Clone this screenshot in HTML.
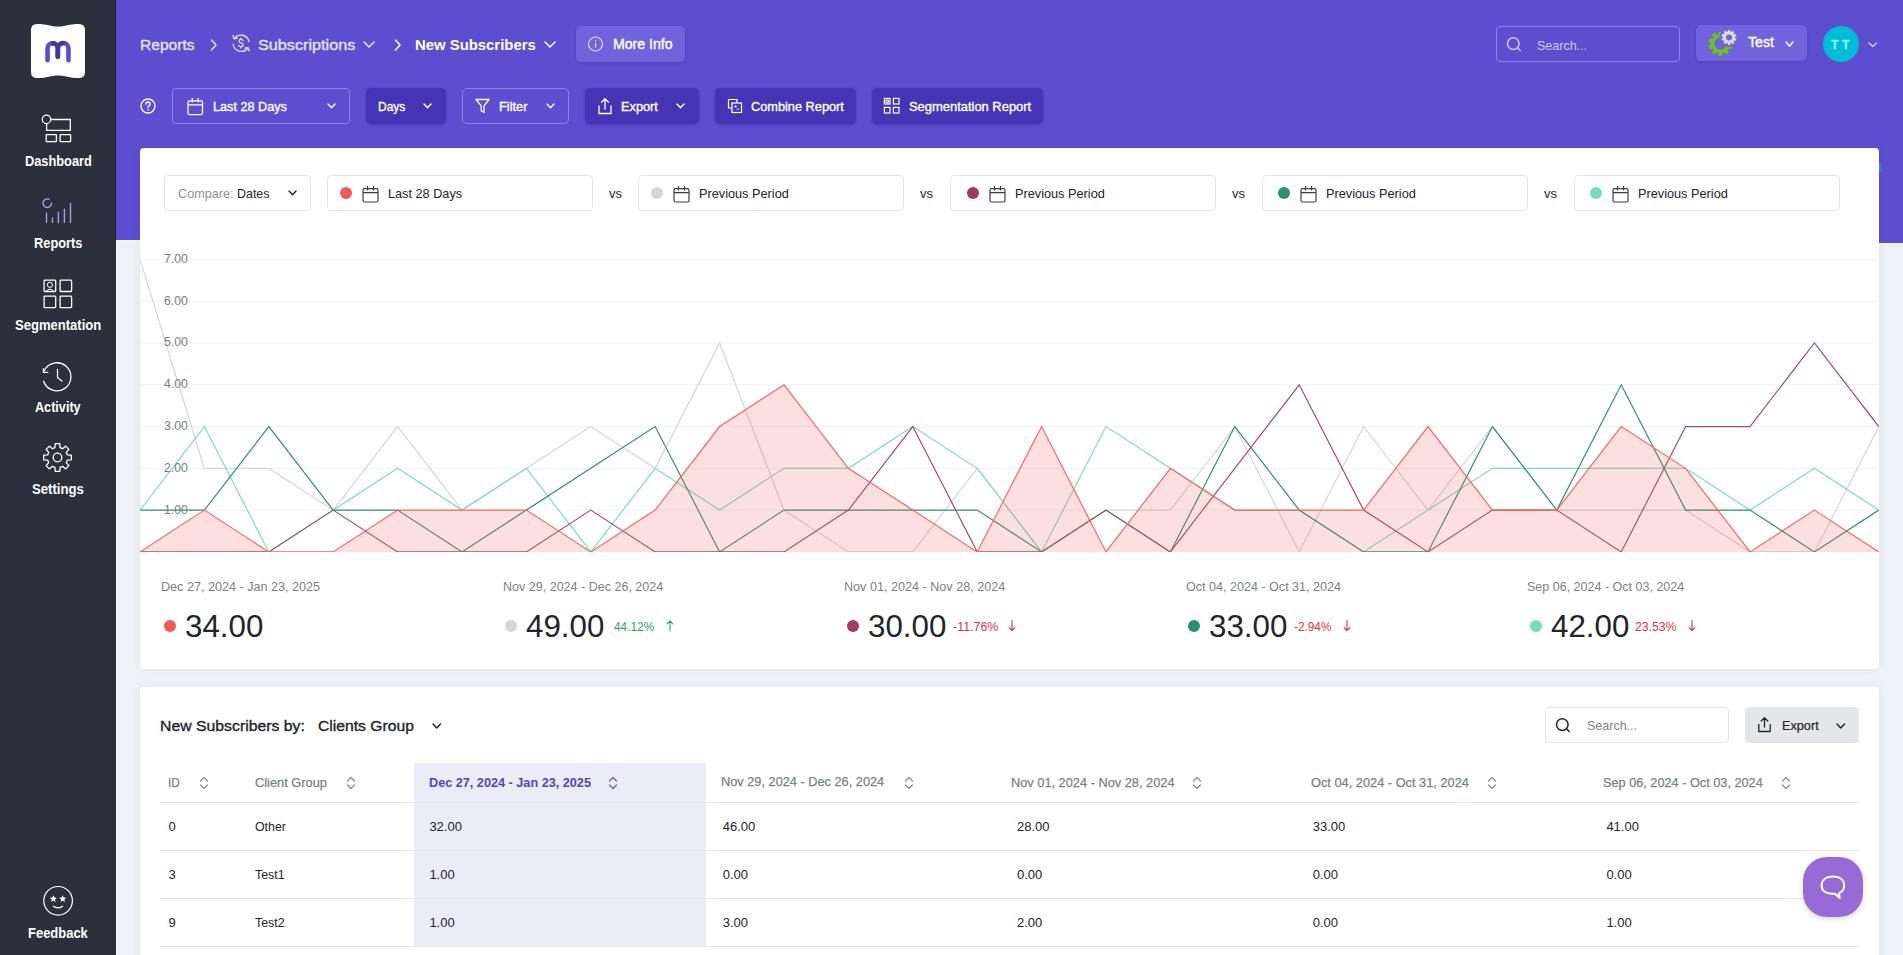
<!DOCTYPE html><html><head><meta charset="utf-8"><style>
html,body{margin:0;padding:0;width:1903px;height:955px;overflow:hidden;background:#eef2f7;font-family:"Liberation Sans",sans-serif;}
.a{position:absolute;box-sizing:border-box;}
svg.a{overflow:visible}
.t{position:absolute;white-space:nowrap;line-height:1;transform-origin:0 0;}
</style></head><body>

<div class="a" style="left:0px;top:0px;width:116px;height:955px;background:#2a313c"></div>
<div class="a" style="left:116px;top:0px;width:1787px;height:240px;background:#5d4ed0"></div>
<div class="a" style="left:1870px;top:0px;width:33px;height:243px;background:#5d4ed0"></div>
<div class="a" style="left:116px;top:240px;width:1px;height:715px;background:#ffffff"></div>
<div class="a" style="left:116px;top:240px;width:1754px;height:1px;background:#f7f9f7"></div>
<div class="a" style="left:1870px;top:243px;width:33px;height:1px;background:#f7f9f7"></div>
<div class="a" style="left:115px;top:0px;width:1px;height:955px;background:#1f262e"></div>
<svg class="a" style="left:31px;top:24px" width="54" height="54" viewBox="0 0 54 54"><path d="M6 0 C16 0 20 2.6 27 2.6 C34 2.6 38 0 48 0 Q54 0 54 6 L54 48 Q54 54 48 54 C38 54 34 51.4 27 51.4 C20 51.4 16 54 6 54 Q0 54 0 48 L0 6 Q0 0 6 0 Z" fill="#fff"/><g fill="none" stroke-width="4.6" stroke-linecap="round"><path d="M16.55 36.15 V24.35 A5.15 5.15 0 0 1 26.85 24.35 V32.75" stroke="#5b4bd0"/><path d="M37.45 36.15 V24.35 A5.3 5.3 0 0 0 26.85 24.35 V32.75" stroke="#5b4bd0"/><path d="M20.2 19.4 A5.15 5.15 0 0 1 26.85 24.35 V32.75 M33.6 19.4 A5.3 5.3 0 0 0 26.85 24.35" stroke="#3f3a98" stroke-width="4.2" stroke-linecap="butt"/><path d="M26.85 30 V32.75" stroke="#3f3a98" stroke-width="4.2"/></g></svg>
<svg class="a" style="left:40px;top:110px" width="36" height="36" viewBox="0 0 36 36"><g fill="none" stroke="#ffffff" stroke-width="1.3"><circle cx="6.5" cy="9.4" r="4.2"/><path d="M10.7 9.5 H30.3 V20.4 H6.6 V13.6"/><rect x="6.2" y="24.6" width="10.2" height="7" rx="0.6"/><rect x="20.1" y="24.6" width="10.5" height="7" rx="0.6"/></g></svg>
<svg class="a" style="left:40px;top:195px" width="36" height="36" viewBox="0 0 36 36"><g fill="none" stroke="#a89cf0" stroke-width="1.4" stroke-linecap="round"><path d="M9 4.2 A4.3 4.3 0 1 0 11.6 8"/><path d="M6.5 18.3 V27.4 M12.5 23.2 V27.4 M18.4 17.2 V27.4 M24.4 14.2 V27.4 M30.5 8.3 V27.4"/></g></svg>
<svg class="a" style="left:40px;top:275px" width="36" height="36" viewBox="0 0 36 36"><g fill="none" stroke="#ffffff" stroke-width="1.3"><rect x="4.1" y="5.2" width="11.6" height="11.3" rx="0.8"/><rect x="20.1" y="5.2" width="11.5" height="11.3" rx="0.8"/><rect x="4.1" y="21.2" width="11.6" height="11.5" rx="0.8"/><rect x="20.1" y="21.2" width="11.5" height="11.5" rx="0.8"/><circle cx="9.9" cy="9.8" r="2.6" stroke-width="1"/><path d="M6 16.4 Q9.9 11.8 13.8 16.4" stroke-width="1"/></g></svg>
<svg class="a" style="left:40px;top:358px" width="36" height="36" viewBox="0 0 36 36"><g fill="none" stroke="#ffffff" stroke-width="1.3" stroke-linecap="butt"><path d="M4.2 13 A14 14 0 1 1 3.5 22.7"/><path d="M3.4 10.3 V14.4 H8.3"/><path d="M17.5 11.1 V19.5 L22.5 23.4"/></g></svg>
<svg class="a" style="left:40px;top:440px" width="36" height="36" viewBox="0 0 36 36"><g fill="none" stroke="#ffffff" stroke-width="1.3" stroke-linejoin="round"><path d="M15.20 3.69 L19.80 3.69 L20.11 7.64 L22.62 8.68 L25.64 6.11 L28.89 9.36 L26.32 12.38 L27.36 14.89 L31.31 15.20 L31.31 19.80 L27.36 20.11 L26.32 22.62 L28.89 25.64 L25.64 28.89 L22.62 26.32 L20.11 27.36 L19.80 31.31 L15.20 31.31 L14.89 27.36 L12.38 26.32 L9.36 28.89 L6.11 25.64 L8.68 22.62 L7.64 20.11 L3.69 19.80 L3.69 15.20 L7.64 14.89 L8.68 12.38 L6.11 9.36 L9.36 6.11 L12.38 8.68 L14.89 7.64Z"/><circle cx="17.5" cy="17.5" r="4.3"/></g></svg>
<svg class="a" style="left:40px;top:883px" width="36" height="36" viewBox="0 0 36 36"><g fill="none" stroke="#ffffff" stroke-width="1.2"><circle cx="18.1" cy="17.8" r="14.3"/><path d="M13 23 Q18.1 26.8 23 23"/></g><g fill="#ffffff"><path d="M13.40 12.20 L14.38 14.55 L16.92 14.76 L14.98 16.41 L15.57 18.89 L13.40 17.57 L11.23 18.89 L11.82 16.41 L9.88 14.76 L12.42 14.55Z"/><path d="M22.70 12.20 L23.68 14.55 L26.22 14.76 L24.28 16.41 L24.87 18.89 L22.70 17.57 L20.53 18.89 L21.12 16.41 L19.18 14.76 L21.72 14.55Z"/></g></svg>
<div class="t" id="nd" style="left:24.6px;top:154.00px;font-size:14px;font-weight:700;color:#ffffff;transform:scaleX(0.9137);">Dashboard</div>
<div class="t" id="nr" style="left:33.7px;top:236.00px;font-size:14px;font-weight:700;color:#ffffff;transform:scaleX(0.9151);">Reports</div>
<div class="t" id="ns" style="left:14.5px;top:318.00px;font-size:14px;font-weight:700;color:#ffffff;transform:scaleX(0.9312);">Segmentation</div>
<div class="t" id="na" style="left:34.9px;top:400.00px;font-size:14px;font-weight:700;color:#ffffff;transform:scaleX(0.9020);">Activity</div>
<div class="t" id="nse" style="left:32px;top:482.00px;font-size:14px;font-weight:700;color:#ffffff;transform:scaleX(0.9400);">Settings</div>
<div class="t" id="nf" style="left:28px;top:926.00px;font-size:14px;font-weight:700;color:#ffffff;transform:scaleX(0.9262);">Feedback</div>
<div class="t" id="h_rep" style="left:140.3px;top:37.00px;font-size:15px;font-weight:400;color:#e6e2fa;transform:scaleX(1.0377);-webkit-text-stroke:0.35px #e6e2fa;">Reports</div>
<svg class="a" style="left:209px;top:38px" width="10" height="14" viewBox="0 0 10 14"><path d="M2.5 2 L7 7 L2.5 12" fill="none" stroke="#e6e2fa" stroke-width="1.5" stroke-linecap="round" stroke-linejoin="round"/></svg>
<svg class="a" style="left:230px;top:32px" width="22" height="22" viewBox="0 0 22 22"><g fill="none" stroke="#e6e2fa" stroke-width="1.3" stroke-linecap="round" stroke-linejoin="round"><path d="M4.2 6.5 A8.3 8.3 0 0 1 19 9.5"/><path d="M18 16 A8.3 8.3 0 0 1 3.2 12.5"/><path d="M3 3.5 L4 6.8 L7.3 6"/><path d="M19.2 18.8 L18 15.6 L14.8 16.2"/><path d="M13 8.6 Q12.5 7.4 11 7.4 Q9 7.4 9 9 Q9 10.6 11 10.9 Q13.2 11.3 13.2 13 Q13.2 14.6 11 14.6 Q9.3 14.6 8.8 13.4 M11 6 V7.4 M11 14.6 V16" stroke-width="1.2"/></g></svg>
<div class="t" id="h_sub" style="left:257.6px;top:37.00px;font-size:15px;font-weight:400;color:#e6e2fa;transform:scaleX(1.0811);-webkit-text-stroke:0.35px #e6e2fa;">Subscriptions</div>
<svg class="a" style="left:362px;top:40px" width="14" height="9"><path d="M2 2 L7.0 7 L12 2" fill="none" stroke="#e6e2fa" stroke-width="1.5" stroke-linecap="round" stroke-linejoin="round"/></svg>
<svg class="a" style="left:393px;top:38px" width="10" height="14" viewBox="0 0 10 14"><path d="M2.5 2 L7 7 L2.5 12" fill="none" stroke="#ffffff" stroke-width="1.5" stroke-linecap="round" stroke-linejoin="round"/></svg>
<div class="t" id="h_new" style="left:415px;top:37.00px;font-size:15px;font-weight:700;color:#ffffff;transform:scaleX(0.9918);">New Subscribers</div>
<svg class="a" style="left:543px;top:40px" width="14" height="9"><path d="M2 2 L7.0 7 L12 2" fill="none" stroke="#ffffff" stroke-width="1.5" stroke-linecap="round" stroke-linejoin="round"/></svg>
<div class="a" style="left:576px;top:26px;width:109px;height:36px;background:#7163dc;border-radius:5px;box-shadow:0 1px 3px rgba(40,20,120,.25)"></div>
<svg class="a" style="left:587px;top:36px" width="18" height="18" viewBox="0 0 18 18"><g fill="none" stroke="#e6e2fa" stroke-width="1.1"><circle cx="8.5" cy="8" r="7"/></g><rect x="7.9" y="7" width="1.3" height="4.6" fill="#e6e2fa"/><rect x="7.9" y="4.3" width="1.3" height="1.3" fill="#e6e2fa"/></svg>
<div class="t" id="h_more" style="left:612.8px;top:37.00px;font-size:14px;font-weight:400;color:#ffffff;transform:scaleX(1.0085);-webkit-text-stroke:0.35px #ffffff;">More Info</div>
<div class="a" style="left:1496px;top:26px;width:184px;height:36px;border:1px solid #8d83e3;border-radius:4px"></div>
<svg class="a" style="left:1504px;top:34px" width="20" height="20" viewBox="0 0 20 20"><g fill="none" stroke="#cfc9f5" stroke-width="1.5" stroke-linecap="round"><circle cx="9.3" cy="9.6" r="5.8"/><path d="M13.5 13.8 L16.2 16.5"/></g></svg>
<div class="t" id="h_search" style="left:1537px;top:39.00px;font-size:13px;font-weight:400;color:#cfc9f5;transform:scaleX(0.9615);">Search...</div>
<div class="a" style="left:1696px;top:25px;width:111px;height:36px;background:#7163dc;border-radius:5px;box-shadow:0 1px 3px rgba(40,20,120,.25)"></div>
<svg class="a" style="left:1706px;top:27px" width="36" height="36" viewBox="0 0 36 36"><path d="M12.59 4.65 L16.41 4.65 L16.67 7.55 L18.12 8.03 L20.04 5.83 L23.13 8.07 L21.63 10.57 L22.53 11.81 L25.37 11.16 L26.55 14.79 L23.87 15.93 L23.87 17.47 L26.55 18.61 L25.37 22.24 L22.53 21.59 L21.63 22.83 L23.13 25.33 L20.04 27.57 L18.12 25.37 L16.67 25.85 L16.41 28.75 L12.59 28.75 L12.33 25.85 L10.88 25.37 L8.96 27.57 L5.87 25.33 L7.37 22.83 L6.47 21.59 L3.63 22.24 L2.45 18.61 L5.13 17.47 L5.13 15.93 L2.45 14.79 L3.63 11.16 L6.47 11.81 L7.37 10.57 L5.87 8.07 L8.96 5.83 L10.88 8.03 L12.33 7.55Z" fill="#6cc61a"/><circle cx="14.5" cy="16.7" r="6.2" fill="#7163dc"/><circle cx="23" cy="10.4" r="9.6" fill="#7163dc"/><path d="M21.81 2.89 L24.19 2.89 L24.36 4.66 L25.27 4.96 L26.45 3.63 L28.37 5.03 L27.47 6.55 L28.04 7.33 L29.77 6.95 L30.51 9.21 L28.88 9.92 L28.88 10.88 L30.51 11.59 L29.77 13.85 L28.04 13.47 L27.47 14.25 L28.37 15.77 L26.45 17.17 L25.27 15.84 L24.36 16.14 L24.19 17.91 L21.81 17.91 L21.64 16.14 L20.73 15.84 L19.55 17.17 L17.63 15.77 L18.53 14.25 L17.96 13.47 L16.23 13.85 L15.49 11.59 L17.12 10.88 L17.12 9.92 L15.49 9.21 L16.23 6.95 L17.96 7.33 L18.53 6.55 L17.63 5.03 L19.55 3.63 L20.73 4.96 L21.64 4.66Z" fill="#dcdcdc"/><circle cx="23" cy="10.4" r="3" fill="#7163dc"/></svg>
<div class="t" id="h_test" style="left:1748.3px;top:35.00px;font-size:14px;font-weight:400;color:#ffffff;transform:scaleX(1.0115);-webkit-text-stroke:0.35px #ffffff;">Test</div>
<svg class="a" style="left:1783.5px;top:39.5px" width="11" height="8"><path d="M2 2 L5.5 6 L9 2" fill="none" stroke="#ffffff" stroke-width="1.5" stroke-linecap="round" stroke-linejoin="round"/></svg>
<div class="a" style="left:1823px;top:26px;width:36px;height:36px;border-radius:50%;background:#00bcd4"></div>
<div class="t" id="h_tt" style="left:1831.4px;top:38.00px;font-size:13px;font-weight:700;color:#86f6ff;transform:scaleX(0.9500);-webkit-text-stroke:0.35px #86f6ff;">T T</div>
<svg class="a" style="left:1867px;top:40.5px" width="11.5" height="7.5"><path d="M2 2 L5.75 5.5 L9.5 2" fill="none" stroke="#dcd8f8" stroke-width="1.2" stroke-linecap="round" stroke-linejoin="round"/></svg>
<svg class="a" style="left:139px;top:97px" width="18" height="18" viewBox="0 0 18 18"><circle cx="9" cy="9" r="7" fill="none" stroke="#ffffff" stroke-width="1.3"/><path d="M6.9 7.3 Q6.9 5 9 5 Q11.1 5 11.1 7 Q11.1 8.3 9.9 8.9 Q9 9.4 9 10.6" fill="none" stroke="#fff" stroke-width="1.3" stroke-linecap="round"/><circle cx="9" cy="12.9" r="0.8" fill="#fff"/></svg>
<div class="a" style="left:172px;top:88px;width:178px;height:36px;border:1px solid #8d83e3;border-radius:4px"></div>
<svg class="a" style="left:187px;top:96.5px" width="16.5" height="18.5" viewBox="0 0 16.5 18.5"><g fill="none" stroke="#ffffff" stroke-width="1.25"><rect x="1" y="3.8" width="14.5" height="13.7" rx="1.5"/><path d="M1 7.9 H15.5 M5.3 1 V5.6 M11.1 1 V5.6"/></g></svg>
<div class="t" id="b_last" style="left:213px;top:100.00px;font-size:13px;font-weight:400;color:#ffffff;transform:scaleX(0.9737);-webkit-text-stroke:0.35px #ffffff;">Last 28 Days</div>
<svg class="a" style="left:325.5px;top:102px" width="11" height="7.8"><path d="M2 2 L5.5 5.8 L9 2" fill="none" stroke="#ffffff" stroke-width="1.4" stroke-linecap="round" stroke-linejoin="round"/></svg>
<div class="a" style="left:366px;top:88px;width:80px;height:36px;background:#4535b5;border-radius:5px;box-shadow:0 1px 3px rgba(30,10,100,.3)"></div>
<div class="t" id="b_days" style="left:378.4px;top:100.00px;font-size:13px;font-weight:400;color:#ffffff;transform:scaleX(0.9200);-webkit-text-stroke:0.35px #ffffff;">Days</div>
<svg class="a" style="left:422px;top:102px" width="11" height="7.8"><path d="M2 2 L5.5 5.8 L9 2" fill="none" stroke="#ffffff" stroke-width="1.4" stroke-linecap="round" stroke-linejoin="round"/></svg>
<div class="a" style="left:462px;top:88px;width:107px;height:36px;border:1px solid #8d83e3;border-radius:5px"></div>
<svg class="a" style="left:474px;top:97px" width="18" height="18" viewBox="0 0 18 18"><path d="M2 2.5 H15 L10 8.8 V15.5 L7.2 13.8 V8.8 Z" fill="none" stroke="#fff" stroke-width="1.3" stroke-linejoin="round"/></svg>
<div class="t" id="b_filter" style="left:499.4px;top:100.00px;font-size:13px;font-weight:400;color:#ffffff;transform:scaleX(0.9862);-webkit-text-stroke:0.35px #ffffff;">Filter</div>
<svg class="a" style="left:544.7px;top:102px" width="11" height="7.8"><path d="M2 2 L5.5 5.8 L9 2" fill="none" stroke="#ffffff" stroke-width="1.4" stroke-linecap="round" stroke-linejoin="round"/></svg>
<div class="a" style="left:585px;top:88px;width:114px;height:36px;background:#4535b5;border-radius:5px;box-shadow:0 1px 3px rgba(30,10,100,.3)"></div>
<svg class="a" style="left:597px;top:97px" width="16" height="18" viewBox="0 0 16 18"><g fill="none" stroke="#fff" stroke-width="1.3" stroke-linecap="round" stroke-linejoin="round"><path d="M8 12 V2 M4.5 5.3 L8 1.8 L11.5 5.3"/><path d="M2 9 V16.5 H14 V9"/></g></svg>
<div class="t" id="b_export" style="left:621.4px;top:100.00px;font-size:13px;font-weight:400;color:#ffffff;transform:scaleX(0.9816);-webkit-text-stroke:0.35px #ffffff;">Export</div>
<svg class="a" style="left:675px;top:102px" width="11" height="7.8"><path d="M2 2 L5.5 5.8 L9 2" fill="none" stroke="#ffffff" stroke-width="1.4" stroke-linecap="round" stroke-linejoin="round"/></svg>
<div class="a" style="left:715px;top:88px;width:141px;height:36px;background:#4535b5;border-radius:5px;box-shadow:0 1px 3px rgba(30,10,100,.3)"></div>
<svg class="a" style="left:727px;top:98px" width="16" height="16" viewBox="0 0 16 16"><g fill="none" stroke="#fff" stroke-width="1.2"><path d="M10 5 V1.5 H1.5 V10 H5"/><rect x="5" y="5" width="9.5" height="9.5"/><path d="M7.5 8.5 H9.7 M8.6 7.4 V9.6 M9.7 11 H12" stroke-width="1"/></g></svg>
<div class="t" id="b_comb" style="left:751px;top:100.00px;font-size:13px;font-weight:400;color:#ffffff;transform:scaleX(0.9811);-webkit-text-stroke:0.35px #ffffff;">Combine Report</div>
<div class="a" style="left:872px;top:88px;width:171px;height:36px;background:#4535b5;border-radius:5px;box-shadow:0 1px 3px rgba(30,10,100,.3)"></div>
<svg class="a" style="left:883px;top:97px" width="18" height="18" viewBox="0 0 18 18"><g fill="none" stroke="#fff" stroke-width="1.2"><rect x="1.4" y="1.4" width="5.6" height="5.6"/><rect x="10.4" y="1.4" width="5.6" height="5.6"/><rect x="1.4" y="10.4" width="5.6" height="5.6"/><rect x="10.4" y="10.4" width="5.6" height="5.6"/><circle cx="4.2" cy="4.2" r="1.3"/></g></svg>
<div class="t" id="b_seg" style="left:908.7px;top:100.00px;font-size:13px;font-weight:400;color:#ffffff;transform:scaleX(0.9943);-webkit-text-stroke:0.35px #ffffff;">Segmentation Report</div>
<div class="a" style="left:140px;top:148px;width:1739px;height:521px;background:#fff;border-radius:4px;box-shadow:0 0 8px rgba(40,50,80,.08)"></div>
<div class="a" style="left:164px;top:175px;width:147px;height:36px;border:1px solid #e1e4ea;border-radius:4px;background:#fff"></div>
<div class="t" id="c_cmp" style="left:177.5px;top:187.00px;font-size:13px;font-weight:400;color:#8a9099;transform:scaleX(0.9737);">Compare:</div>
<div class="t" id="c_dates" style="left:236.5px;top:187.00px;font-size:13px;font-weight:400;color:#212529;transform:scaleX(0.9559);">Dates</div>
<svg class="a" style="left:286.5px;top:189px" width="11" height="7.8"><path d="M2 2 L5.5 5.8 L9 2" fill="none" stroke="#212529" stroke-width="1.4" stroke-linecap="round" stroke-linejoin="round"/></svg>
<div class="a" style="left:327.4px;top:175px;width:266.0px;height:36px;border:1px solid #e1e4ea;border-radius:4px;background:#fff"></div>
<div class="a" style="left:340.0px;top:187px;width:12px;height:12px;border-radius:50%;background:#ef5b5b"></div>
<svg class="a" style="left:362.0px;top:184.5px" width="17" height="18" viewBox="0 0 17 18"><g fill="none" stroke="#3a3f47" stroke-width="1.2"><rect x="1" y="3.7" width="15" height="13.3" rx="1.5"/><path d="M1 7.7 H16 M5.5 1 V5.5 M11.5 1 V5.5"/></g></svg>
<div class="t" id="c_p0" style="left:388.0px;top:187.00px;font-size:13px;font-weight:400;color:#212529;transform:scaleX(0.9763);">Last 28 Days</div>
<div class="t" id="c_vs0" style="left:609.4px;top:187.00px;font-size:13px;font-weight:400;color:#212529;transform:scaleX(0.9923);">vs</div>
<div class="a" style="left:638.4px;top:175px;width:266.0px;height:36px;border:1px solid #e1e4ea;border-radius:4px;background:#fff"></div>
<div class="a" style="left:651.0px;top:187px;width:12px;height:12px;border-radius:50%;background:#d6d6d6"></div>
<svg class="a" style="left:673.0px;top:184.5px" width="17" height="18" viewBox="0 0 17 18"><g fill="none" stroke="#3a3f47" stroke-width="1.2"><rect x="1" y="3.7" width="15" height="13.3" rx="1.5"/><path d="M1 7.7 H16 M5.5 1 V5.5 M11.5 1 V5.5"/></g></svg>
<div class="t" id="c_p1" style="left:699.0px;top:187.00px;font-size:13px;font-weight:400;color:#212529;transform:scaleX(0.9783);">Previous Period</div>
<div class="t" id="c_vs1" style="left:920.4px;top:187.00px;font-size:13px;font-weight:400;color:#212529;transform:scaleX(0.9923);">vs</div>
<div class="a" style="left:950.4px;top:175px;width:266.0000000000001px;height:36px;border:1px solid #e1e4ea;border-radius:4px;background:#fff"></div>
<div class="a" style="left:966.8px;top:187px;width:12px;height:12px;border-radius:50%;background:#9e3d5d"></div>
<svg class="a" style="left:988.8px;top:184.5px" width="17" height="18" viewBox="0 0 17 18"><g fill="none" stroke="#3a3f47" stroke-width="1.2"><rect x="1" y="3.7" width="15" height="13.3" rx="1.5"/><path d="M1 7.7 H16 M5.5 1 V5.5 M11.5 1 V5.5"/></g></svg>
<div class="t" id="c_p2" style="left:1014.8px;top:187.00px;font-size:13px;font-weight:400;color:#212529;transform:scaleX(0.9783);">Previous Period</div>
<div class="t" id="c_vs2" style="left:1232.4px;top:187.00px;font-size:13px;font-weight:400;color:#212529;transform:scaleX(0.9923);">vs</div>
<div class="a" style="left:1261.8px;top:175px;width:266.0px;height:36px;border:1px solid #e1e4ea;border-radius:4px;background:#fff"></div>
<div class="a" style="left:1278.1999999999998px;top:187px;width:12px;height:12px;border-radius:50%;background:#2e8f6d"></div>
<svg class="a" style="left:1300.1999999999998px;top:184.5px" width="17" height="18" viewBox="0 0 17 18"><g fill="none" stroke="#3a3f47" stroke-width="1.2"><rect x="1" y="3.7" width="15" height="13.3" rx="1.5"/><path d="M1 7.7 H16 M5.5 1 V5.5 M11.5 1 V5.5"/></g></svg>
<div class="t" id="c_p3" style="left:1326.1999999999998px;top:187.00px;font-size:13px;font-weight:400;color:#212529;transform:scaleX(0.9783);">Previous Period</div>
<div class="t" id="c_vs3" style="left:1543.8px;top:187.00px;font-size:13px;font-weight:400;color:#212529;transform:scaleX(0.9923);">vs</div>
<div class="a" style="left:1573.6px;top:175px;width:266.0px;height:36px;border:1px solid #e1e4ea;border-radius:4px;background:#fff"></div>
<div class="a" style="left:1589.9999999999998px;top:187px;width:12px;height:12px;border-radius:50%;background:#76dcb9"></div>
<svg class="a" style="left:1611.9999999999998px;top:184.5px" width="17" height="18" viewBox="0 0 17 18"><g fill="none" stroke="#3a3f47" stroke-width="1.2"><rect x="1" y="3.7" width="15" height="13.3" rx="1.5"/><path d="M1 7.7 H16 M5.5 1 V5.5 M11.5 1 V5.5"/></g></svg>
<div class="t" id="c_p4" style="left:1637.9999999999998px;top:187.00px;font-size:13px;font-weight:400;color:#212529;transform:scaleX(0.9783);">Previous Period</div>
<svg class="a" style="left:0;top:0" width="1903" height="955"><line x1="140.0" y1="510.12" x2="1878" y2="510.12" stroke="#eef1f6" stroke-width="1"/><line x1="140.0" y1="468.34" x2="1878" y2="468.34" stroke="#eef1f6" stroke-width="1"/><line x1="140.0" y1="426.56" x2="1878" y2="426.56" stroke="#eef1f6" stroke-width="1"/><line x1="140.0" y1="384.78" x2="1878" y2="384.78" stroke="#eef1f6" stroke-width="1"/><line x1="140.0" y1="343.00" x2="1878" y2="343.00" stroke="#eef1f6" stroke-width="1"/><line x1="140.0" y1="301.22" x2="1878" y2="301.22" stroke="#eef1f6" stroke-width="1"/><line x1="140.0" y1="259.44" x2="1878" y2="259.44" stroke="#eef1f6" stroke-width="1"/><defs><clipPath id="cc"><rect x="140" y="240" width="1738.8" height="311.95"/></clipPath></defs><g clip-path="url(#cc)"><polyline points="140.00,259.44 204.40,468.34 268.80,468.34 333.20,510.12 397.60,426.56 462.00,510.12 526.40,468.34 590.80,426.56 655.20,468.34 719.60,343.00 784.00,510.12 848.40,551.90 912.80,551.90 977.20,468.34 1041.60,551.90 1106.00,510.12 1170.40,510.12 1234.80,426.56 1299.20,551.90 1363.60,426.56 1428.00,510.12 1492.40,426.56 1556.80,510.12 1621.20,510.12 1685.60,510.12 1750.00,551.90 1814.40,551.90 1878.80,426.56" fill="none" stroke="#d5d5d5" stroke-width="1.2" stroke-linejoin="miter"/><polyline points="140.00,510.12 204.40,426.56 268.80,551.90 333.20,510.12 397.60,468.34 462.00,510.12 526.40,468.34 590.80,551.90 655.20,468.34 719.60,510.12 784.00,468.34 848.40,468.34 912.80,426.56 977.20,468.34 1041.60,551.90 1106.00,426.56 1170.40,468.34 1234.80,510.12 1299.20,510.12 1363.60,551.90 1428.00,510.12 1492.40,468.34 1556.80,468.34 1621.20,468.34 1685.60,468.34 1750.00,510.12 1814.40,468.34 1878.80,510.12" fill="none" stroke="#7fdcbc" stroke-width="1.2" stroke-linejoin="miter"/><polyline points="140.00,510.12 204.40,510.12 268.80,426.56 333.20,510.12 397.60,510.12 462.00,551.90 526.40,510.12 590.80,468.34 655.20,426.56 719.60,551.90 784.00,510.12 848.40,510.12 912.80,510.12 977.20,510.12 1041.60,551.90 1106.00,510.12 1170.40,551.90 1234.80,426.56 1299.20,510.12 1363.60,551.90 1428.00,551.90 1492.40,426.56 1556.80,510.12 1621.20,384.78 1685.60,510.12 1750.00,510.12 1814.40,551.90 1878.80,510.12" fill="none" stroke="#338f71" stroke-width="1.2" stroke-linejoin="miter"/><polyline points="140.00,551.90 204.40,551.90 268.80,551.90 333.20,510.12 397.60,551.90 462.00,551.90 526.40,551.90 590.80,510.12 655.20,551.90 719.60,551.90 784.00,551.90 848.40,510.12 912.80,426.56 977.20,551.90 1041.60,551.90 1106.00,510.12 1170.40,551.90 1234.80,468.34 1299.20,384.78 1363.60,510.12 1428.00,551.90 1492.40,510.12 1556.80,510.12 1621.20,551.90 1685.60,426.56 1750.00,426.56 1814.40,343.00 1878.80,426.56" fill="none" stroke="#a44a6c" stroke-width="1.2" stroke-linejoin="miter"/><polygon points="140.0,551.9 140.00,551.90 204.40,510.12 268.80,551.90 333.20,551.90 397.60,510.12 462.00,510.12 526.40,510.12 590.80,551.90 655.20,510.12 719.60,426.56 784.00,384.78 848.40,468.34 912.80,510.12 977.20,551.90 1041.60,426.56 1106.00,551.90 1170.40,468.34 1234.80,510.12 1299.20,510.12 1363.60,510.12 1428.00,426.56 1492.40,510.12 1556.80,510.12 1621.20,426.56 1685.60,468.34 1750.00,551.90 1814.40,510.12 1878.80,551.90 1878.7999999999997,551.9" fill="rgba(240,98,95,0.2)"/><polyline points="140.00,551.90 204.40,510.12 268.80,551.90 333.20,551.90 397.60,510.12 462.00,510.12 526.40,510.12 590.80,551.90 655.20,510.12 719.60,426.56 784.00,384.78 848.40,468.34 912.80,510.12 977.20,551.90 1041.60,426.56 1106.00,551.90 1170.40,468.34 1234.80,510.12 1299.20,510.12 1363.60,510.12 1428.00,426.56 1492.40,510.12 1556.80,510.12 1621.20,426.56 1685.60,468.34 1750.00,551.90 1814.40,510.12 1878.80,551.90" fill="none" stroke="#f06a64" stroke-width="1.2" stroke-linejoin="miter"/></g></svg>
<div class="t" id="y1" style="left:164.1px;top:504.00px;font-size:12px;font-weight:400;color:#767c86;transform:scaleX(1.0217);">1.00</div>
<div class="t" id="y2" style="left:164.1px;top:462.00px;font-size:12px;font-weight:400;color:#767c86;transform:scaleX(1.0217);">2.00</div>
<div class="t" id="y3" style="left:164.1px;top:420.00px;font-size:12px;font-weight:400;color:#767c86;transform:scaleX(1.0217);">3.00</div>
<div class="t" id="y4" style="left:164.1px;top:378.00px;font-size:12px;font-weight:400;color:#767c86;transform:scaleX(1.0217);">4.00</div>
<div class="t" id="y5" style="left:164.1px;top:336.00px;font-size:12px;font-weight:400;color:#767c86;transform:scaleX(1.0217);">5.00</div>
<div class="t" id="y6" style="left:164.1px;top:295.00px;font-size:12px;font-weight:400;color:#767c86;transform:scaleX(1.0217);">6.00</div>
<div class="t" id="y7" style="left:164.1px;top:253.00px;font-size:12px;font-weight:400;color:#767c86;transform:scaleX(1.0217);">7.00</div>
<div class="t" id="s_d0" style="left:161.3px;top:580.00px;font-size:13px;font-weight:400;color:#7b8189;transform:scaleX(0.9695);">Dec 27, 2024 - Jan 23, 2025</div>
<div class="a" style="left:163.8px;top:620px;width:12px;height:12px;border-radius:50%;background:#ef5b5b"></div>
<div class="t" id="s_v0" style="left:184.9px;top:610.00px;font-size:32px;font-weight:400;color:#212529;transform:scaleX(0.9788);">34.00</div>
<div class="t" id="s_d1" style="left:502.8px;top:580.00px;font-size:13px;font-weight:400;color:#7b8189;transform:scaleX(0.9639);">Nov 29, 2024 - Dec 26, 2024</div>
<div class="a" style="left:505.3px;top:620px;width:12px;height:12px;border-radius:50%;background:#d6d6d6"></div>
<div class="t" id="s_v1" style="left:526.4px;top:610.00px;font-size:32px;font-weight:400;color:#212529;transform:scaleX(0.9788);">49.00</div>
<div class="t" id="s_p1" style="left:614.4px;top:621.00px;font-size:12px;font-weight:400;color:#2aa65a;transform:scaleX(0.9878);">44.12%</div>
<svg class="a" style="left:664.5px;top:619px" width="10" height="14" viewBox="0 0 10 14"><g fill="none" stroke="#2aa65a" stroke-width="1.1" stroke-linecap="round" stroke-linejoin="round"><path d="M5 12 V2 M2.2 4.8 L5 2 L7.8 4.8"/></g></svg>
<div class="t" id="s_d2" style="left:844.3px;top:580.00px;font-size:13px;font-weight:400;color:#7b8189;transform:scaleX(0.9699);">Nov 01, 2024 - Nov 28, 2024</div>
<div class="a" style="left:846.8px;top:620px;width:12px;height:12px;border-radius:50%;background:#9e3d5d"></div>
<div class="t" id="s_v2" style="left:867.9px;top:610.00px;font-size:32px;font-weight:400;color:#212529;transform:scaleX(0.9788);">30.00</div>
<div class="t" id="s_p2" style="left:952.6px;top:621.00px;font-size:12px;font-weight:400;color:#e0323c;transform:scaleX(1.0364);">-11.76%</div>
<svg class="a" style="left:1007.3px;top:619px" width="10" height="14" viewBox="0 0 10 14"><g fill="none" stroke="#e0323c" stroke-width="1.1" stroke-linecap="round" stroke-linejoin="round"><path d="M5 1.5 V11.5 M2.2 8.7 L5 11.5 L7.8 8.7"/></g></svg>
<div class="t" id="s_d3" style="left:1185.8px;top:580.00px;font-size:13px;font-weight:400;color:#7b8189;transform:scaleX(0.9662);">Oct 04, 2024 - Oct 31, 2024</div>
<div class="a" style="left:1188.3px;top:620px;width:12px;height:12px;border-radius:50%;background:#2e8f6d"></div>
<div class="t" id="s_v3" style="left:1209.3999999999999px;top:610.00px;font-size:32px;font-weight:400;color:#212529;transform:scaleX(0.9788);">33.00</div>
<div class="t" id="s_p3" style="left:1294px;top:621.00px;font-size:12px;font-weight:400;color:#e0323c;transform:scaleX(0.9842);">-2.94%</div>
<svg class="a" style="left:1341.8px;top:619px" width="10" height="14" viewBox="0 0 10 14"><g fill="none" stroke="#e0323c" stroke-width="1.1" stroke-linecap="round" stroke-linejoin="round"><path d="M5 1.5 V11.5 M2.2 8.7 L5 11.5 L7.8 8.7"/></g></svg>
<div class="t" id="s_d4" style="left:1527.3px;top:580.00px;font-size:13px;font-weight:400;color:#7b8189;transform:scaleX(0.9626);">Sep 06, 2024 - Oct 03, 2024</div>
<div class="a" style="left:1529.8px;top:620px;width:12px;height:12px;border-radius:50%;background:#76dcb9"></div>
<div class="t" id="s_v4" style="left:1550.8999999999999px;top:610.00px;font-size:32px;font-weight:400;color:#212529;transform:scaleX(0.9788);">42.00</div>
<div class="t" id="s_p4" style="left:1635px;top:621.00px;font-size:12px;font-weight:400;color:#e0323c;transform:scaleX(1.0195);">23.53%</div>
<svg class="a" style="left:1687px;top:619px" width="10" height="14" viewBox="0 0 10 14"><g fill="none" stroke="#e0323c" stroke-width="1.1" stroke-linecap="round" stroke-linejoin="round"><path d="M5 1.5 V11.5 M2.2 8.7 L5 11.5 L7.8 8.7"/></g></svg>
<div class="a" style="left:140px;top:687px;width:1739px;height:293px;background:#fff;border-radius:4px;box-shadow:0 0 8px rgba(40,50,80,.08)"></div>
<div class="t" id="t_by" style="left:160.2px;top:718.00px;font-size:15px;font-weight:400;color:#212529;transform:scaleX(1.0529);-webkit-text-stroke:0.35px #212529;">New Subscribers by:</div>
<div class="t" id="t_cg" style="left:318.1px;top:718.00px;font-size:15px;font-weight:400;color:#212529;transform:scaleX(1.0457);-webkit-text-stroke:0.35px #212529;">Clients Group</div>
<svg class="a" style="left:431px;top:721.5px" width="11.5" height="8"><path d="M2 2 L5.75 6 L9.5 2" fill="none" stroke="#212529" stroke-width="1.5" stroke-linecap="round" stroke-linejoin="round"/></svg>
<div class="a" style="left:1545px;top:707px;width:184px;height:36px;border:1px solid #e1e4ea;border-radius:4px;background:#fff"></div>
<svg class="a" style="left:1553px;top:715px" width="20" height="20" viewBox="0 0 20 20"><g fill="none" stroke="#212529" stroke-width="1.5" stroke-linecap="round"><circle cx="9.3" cy="9.6" r="5.8"/><path d="M13.5 13.8 L16.2 16.5"/></g></svg>
<div class="t" id="t_search" style="left:1586.8px;top:719.00px;font-size:13px;font-weight:400;color:#7b8189;transform:scaleX(0.9615);">Search...</div>
<div class="a" style="left:1745px;top:707px;width:114px;height:36px;background:#e4e6ea;border-radius:4px"></div>
<svg class="a" style="left:1757px;top:716px" width="16" height="18" viewBox="0 0 16 18"><g fill="none" stroke="#212529" stroke-width="1.3" stroke-linecap="round" stroke-linejoin="round"><path d="M7.5 11 V1.8 M4.2 5 L7.5 1.7 L10.8 5"/><path d="M1.8 8.5 V15.5 H13.2 V8.5"/></g></svg>
<div class="t" id="t_export" style="left:1781.6px;top:719.00px;font-size:13px;font-weight:400;color:#212529;transform:scaleX(0.9763);-webkit-text-stroke:0.2px #212529;">Export</div>
<svg class="a" style="left:1835px;top:721.5px" width="11.5" height="8"><path d="M2 2 L5.75 6 L9.5 2" fill="none" stroke="#212529" stroke-width="1.5" stroke-linecap="round" stroke-linejoin="round"/></svg>
<div class="a" style="left:414px;top:763px;width:292px;height:184px;background:#ecebf8"></div>
<div class="a" style="left:160px;top:802px;width:1699px;height:1px;background:#e6e8ee"></div>
<div class="a" style="left:160px;top:850px;width:1699px;height:1px;background:#e6e8ee"></div>
<div class="a" style="left:160px;top:898px;width:1699px;height:1px;background:#e6e8ee"></div>
<div class="a" style="left:160px;top:946px;width:1699px;height:1px;background:#e6e8ee"></div>
<div class="t" id="th0" style="left:168.4px;top:776.00px;font-size:13px;font-weight:400;color:#7b8189;transform:scaleX(0.9000);-webkit-text-stroke:0.25px #7b8189;">ID</div>
<svg class="a" style="left:199px;top:775.5px" width="10" height="14" viewBox="0 0 10 14"><g fill="none" stroke="#8a9099" stroke-width="1.3" stroke-linecap="round" stroke-linejoin="round"><path d="M1.5 5 L5 1.5 L8.5 5 M1.5 9 L5 12.5 L8.5 9"/></g></svg>
<div class="t" id="th1" style="left:255px;top:776.00px;font-size:13px;font-weight:400;color:#7b8189;transform:scaleX(0.9863);-webkit-text-stroke:0.25px #7b8189;">Client Group</div>
<svg class="a" style="left:345.5px;top:775.5px" width="10" height="14" viewBox="0 0 10 14"><g fill="none" stroke="#8a9099" stroke-width="1.3" stroke-linecap="round" stroke-linejoin="round"><path d="M1.5 5 L5 1.5 L8.5 5 M1.5 9 L5 12.5 L8.5 9"/></g></svg>
<div class="t" id="th2" style="left:428.5px;top:776.00px;font-size:13px;font-weight:700;color:#5444c4;transform:scaleX(0.9741);">Dec 27, 2024 - Jan 23, 2025</div>
<svg class="a" style="left:608px;top:775.5px" width="10" height="14" viewBox="0 0 10 14"><g fill="none" stroke="#6a5bd0" stroke-width="1.3" stroke-linecap="round" stroke-linejoin="round"><path d="M1.5 5 L5 1.5 L8.5 5 M1.5 9 L5 12.5 L8.5 9"/></g></svg>
<div class="t" id="th3" style="left:721.4px;top:775.00px;font-size:13px;font-weight:400;color:#7b8189;transform:scaleX(0.9819);-webkit-text-stroke:0.25px #7b8189;">Nov 29, 2024 - Dec 26, 2024</div>
<svg class="a" style="left:904px;top:775.5px" width="10" height="14" viewBox="0 0 10 14"><g fill="none" stroke="#8a9099" stroke-width="1.3" stroke-linecap="round" stroke-linejoin="round"><path d="M1.5 5 L5 1.5 L8.5 5 M1.5 9 L5 12.5 L8.5 9"/></g></svg>
<div class="t" id="th4" style="left:1010.5px;top:776.00px;font-size:13px;font-weight:400;color:#7b8189;transform:scaleX(0.9837);-webkit-text-stroke:0.25px #7b8189;">Nov 01, 2024 - Nov 28, 2024</div>
<svg class="a" style="left:1192.4px;top:775.5px" width="10" height="14" viewBox="0 0 10 14"><g fill="none" stroke="#8a9099" stroke-width="1.3" stroke-linecap="round" stroke-linejoin="round"><path d="M1.5 5 L5 1.5 L8.5 5 M1.5 9 L5 12.5 L8.5 9"/></g></svg>
<div class="t" id="th5" style="left:1310.5px;top:776.00px;font-size:13px;font-weight:400;color:#7b8189;transform:scaleX(0.9844);-webkit-text-stroke:0.25px #7b8189;">Oct 04, 2024 - Oct 31, 2024</div>
<svg class="a" style="left:1487px;top:775.5px" width="10" height="14" viewBox="0 0 10 14"><g fill="none" stroke="#8a9099" stroke-width="1.3" stroke-linecap="round" stroke-linejoin="round"><path d="M1.5 5 L5 1.5 L8.5 5 M1.5 9 L5 12.5 L8.5 9"/></g></svg>
<div class="t" id="th6" style="left:1602.6px;top:776.00px;font-size:13px;font-weight:400;color:#7b8189;transform:scaleX(0.9779);-webkit-text-stroke:0.25px #7b8189;">Sep 06, 2024 - Oct 03, 2024</div>
<svg class="a" style="left:1780.6px;top:775.5px" width="10" height="14" viewBox="0 0 10 14"><g fill="none" stroke="#8a9099" stroke-width="1.3" stroke-linecap="round" stroke-linejoin="round"><path d="M1.5 5 L5 1.5 L8.5 5 M1.5 9 L5 12.5 L8.5 9"/></g></svg>
<div class="t" id="r0_0" style="left:168.4px;top:820.00px;font-size:13px;font-weight:400;color:#212529;">0</div>
<div class="t" id="r0_1" style="left:255px;top:820.00px;font-size:13px;font-weight:400;color:#212529;transform:scaleX(0.95);">Other</div>
<div class="t" id="r0_2" style="left:429.4px;top:820.00px;font-size:13px;font-weight:400;color:#212529;">32.00</div>
<div class="t" id="r0_3" style="left:722.7px;top:820.00px;font-size:13px;font-weight:400;color:#212529;">46.00</div>
<div class="t" id="r0_4" style="left:1017px;top:820.00px;font-size:13px;font-weight:400;color:#212529;">28.00</div>
<div class="t" id="r0_5" style="left:1312.7px;top:820.00px;font-size:13px;font-weight:400;color:#212529;">33.00</div>
<div class="t" id="r0_6" style="left:1606.4px;top:820.00px;font-size:13px;font-weight:400;color:#212529;">41.00</div>
<div class="t" id="r1_0" style="left:168.4px;top:868.00px;font-size:13px;font-weight:400;color:#212529;">3</div>
<div class="t" id="r1_1" style="left:255px;top:868.00px;font-size:13px;font-weight:400;color:#212529;transform:scaleX(0.95);">Test1</div>
<div class="t" id="r1_2" style="left:429.4px;top:868.00px;font-size:13px;font-weight:400;color:#212529;">1.00</div>
<div class="t" id="r1_3" style="left:722.7px;top:868.00px;font-size:13px;font-weight:400;color:#212529;">0.00</div>
<div class="t" id="r1_4" style="left:1017px;top:868.00px;font-size:13px;font-weight:400;color:#212529;">0.00</div>
<div class="t" id="r1_5" style="left:1312.7px;top:868.00px;font-size:13px;font-weight:400;color:#212529;">0.00</div>
<div class="t" id="r1_6" style="left:1606.4px;top:868.00px;font-size:13px;font-weight:400;color:#212529;">0.00</div>
<div class="t" id="r2_0" style="left:168.4px;top:916.00px;font-size:13px;font-weight:400;color:#212529;">9</div>
<div class="t" id="r2_1" style="left:255px;top:916.00px;font-size:13px;font-weight:400;color:#212529;transform:scaleX(0.95);">Test2</div>
<div class="t" id="r2_2" style="left:429.4px;top:916.00px;font-size:13px;font-weight:400;color:#212529;">1.00</div>
<div class="t" id="r2_3" style="left:722.7px;top:916.00px;font-size:13px;font-weight:400;color:#212529;">3.00</div>
<div class="t" id="r2_4" style="left:1017px;top:916.00px;font-size:13px;font-weight:400;color:#212529;">2.00</div>
<div class="t" id="r2_5" style="left:1312.7px;top:916.00px;font-size:13px;font-weight:400;color:#212529;">0.00</div>
<div class="t" id="r2_6" style="left:1606.4px;top:916.00px;font-size:13px;font-weight:400;color:#212529;">1.00</div>
<div class="a" style="left:1803px;top:857px;width:60px;height:60px;background:#986ad6;border-radius:24px;box-shadow:0 2px 6px rgba(0,0,0,.15)"></div>
<svg class="a" style="left:1813px;top:867px" width="40" height="40" viewBox="0 0 40 40"><path d="M20 9.5 C13 9.5 8.6 13 8.6 18.5 C8.6 23.8 13 26.8 20 26.8 L22 26.8 L26.7 31 L25.9 26.4 C29.3 25 31.2 22.3 31.2 18.5 C31.2 13 27 9.5 20 9.5 Z" fill="none" stroke="#fff" stroke-width="2" stroke-linejoin="round"/></svg>
<div class="a" style="left:1879px;top:163px;width:1.5px;height:9px;background:#3a7fd8"></div>
</body></html>
